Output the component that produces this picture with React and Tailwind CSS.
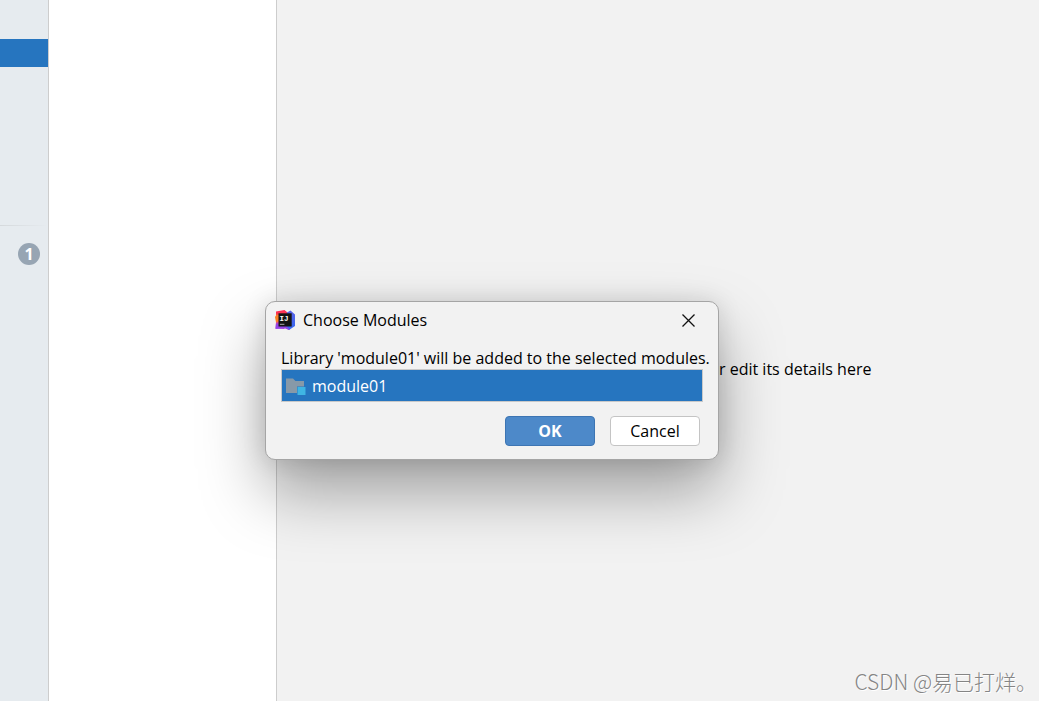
import React, { useState } from 'react';

function IdeaLogo() {
  return (
    <svg viewBox="0 0 20 20" className="size-5 shrink-0" aria-hidden="true">
      <defs>
        <linearGradient id="idea-warm" x1="0" y1="0" x2="0" y2="1">
          <stop offset="0" stopColor="#fe2857" />
          <stop offset="0.4" stopColor="#fc4a4c" />
          <stop offset="0.6" stopColor="#e8508a" />
          <stop offset="1" stopColor="#a43ee0" />
        </linearGradient>
        <linearGradient id="idea-cool" x1="0" y1="0" x2="0" y2="1">
          <stop offset="0" stopColor="#5a62e8" />
          <stop offset="1" stopColor="#3568f0" />
        </linearGradient>
      </defs>
      <path d="M1 1.500 9.500 0 13 3v13l-4 3-8.500-.5L1 12z" fill="url(#idea-warm)" />
      <path d="M0 7 1.500 4.500 4 5v6l-3 1.500z" fill="#fd8224" />
      <path d="m12 2.500 3.500-2L20 4.500v11.500L14 20l-5-3z" fill="url(#idea-cool)" />
      <path d="M1 13.500h7l7 6-1 .5-5-2-8.500 1z" fill="#9345e6" />
      <path d="M3.500 3.300h13.200v13.200H3.500z" fill="#141414" />
      <text x="4.500" y="10.600" fontSize="7.500" fill="#fff" className="font-['Liberation_Mono',monospace] font-bold">IJ</text>
      <path d="M4.900 13.800h4.500v1H4.900z" fill="#aaa" />
    </svg>
  );
}

function ModuleIcon() {
  return (
    <svg viewBox="0 0 20 20" className="size-5 shrink-0" aria-hidden="true">
      <path d="M0 2.500h7L9.500 5H18v5.500h-7V17H0z" fill="#8799a8" />
      <path d="M11.500 11h8v8h-8z" fill="#3fb5e3" />
    </svg>
  );
}

function ChooseModulesDialog() {
  const [selected, setSelected] = useState(true);

  return (
    <section
      role="dialog"
      aria-labelledby="dialog-title"
      className="absolute top-[301px] left-[265px] w-[454px] rounded-[10px] border border-[#a5a5a5] bg-[#f2f2f2] px-[15px] pb-[13px] shadow-[0_0_24px_rgba(0,0,0,0.12),0_32px_64px_rgba(0,0,0,0.34)]"
    >
      <header className="-ml-1.5 flex h-9 items-center">
        <IdeaLogo />
        <h1 id="dialog-title" className="ml-2 flex-1">Choose Modules</h1>
        <button type="button" aria-label="Close" className="mr-1.5 p-0.5">
          <svg viewBox="0 0 13 13" className="size-[13px]" aria-hidden="true">
            <path d="M.5.5l12 12M12.500.5l-12 12" stroke="#111" strokeWidth="1.300" />
          </svg>
        </button>
      </header>

      <p className="mt-[9px] whitespace-nowrap">
        Library 'module01' will be added to the selected modules.
      </p>

      {/* Module list */}
      <div className="border border-[#c9c9c9]">
        <button
          type="button"
          aria-pressed={selected}
          onClick={() => setSelected(!selected)}
          className={`flex h-[31px] w-full items-center gap-1.5 px-1 text-left ${selected ? 'bg-[#2675bf] text-white' : 'bg-white text-black'}`}
        >
          <ModuleIcon />
          module01
        </button>
      </div>

      <footer className="mt-3.5 mr-[3px] flex justify-end gap-[15px]">
        <button type="button" className="h-[30px] w-[90px] rounded-[4px] border border-[#3d75b3] bg-[#4d89c9] font-bold text-white">
          OK
        </button>
        <button type="button" className="h-[30px] w-[90px] rounded-[4px] border border-[#c4c4c4] bg-white">
          Cancel
        </button>
      </footer>
    </section>
  );
}

export default function App() {
  return (
    <div className="relative flex min-h-screen overflow-hidden bg-[#f2f2f2] font-['Open_Sans','Noto_Sans_CJK_SC',sans-serif] text-[16px] leading-[22px] text-black">
      {/* Settings categories */}
      <nav className="w-[49px] shrink-0 border-r border-[#cdcdcd] bg-[#e6ebef] pt-[39px]">
        <div className="h-7 bg-[#2675bf]" />
        <div className="mt-[158px] h-px bg-gradient-to-r from-[#d5d9dc] to-transparent" />
        <div className="mt-[17px] mr-2 ml-auto flex size-[22px] items-center justify-center rounded-full bg-[#97a5b3] font-bold text-white">
          1
        </div>
      </nav>

      {/* Library list */}
      <aside className="w-[228px] shrink-0 border-r border-[#cdcdcd] bg-white" />

      <main className="flex flex-1 flex-col justify-between">
        <p className="mt-[358px] ml-[442px] whitespace-nowrap">r edit its details here</p>
        <p className="mr-0.5 mb-1 self-end font-['Noto_Sans_CJK_SC',sans-serif] text-[21px] leading-8 font-light text-[#858585] [text-shadow:1px_1px_0_#fff]">
          CSDN @易已打烊。
        </p>
      </main>

      <ChooseModulesDialog />
    </div>
  );
}
